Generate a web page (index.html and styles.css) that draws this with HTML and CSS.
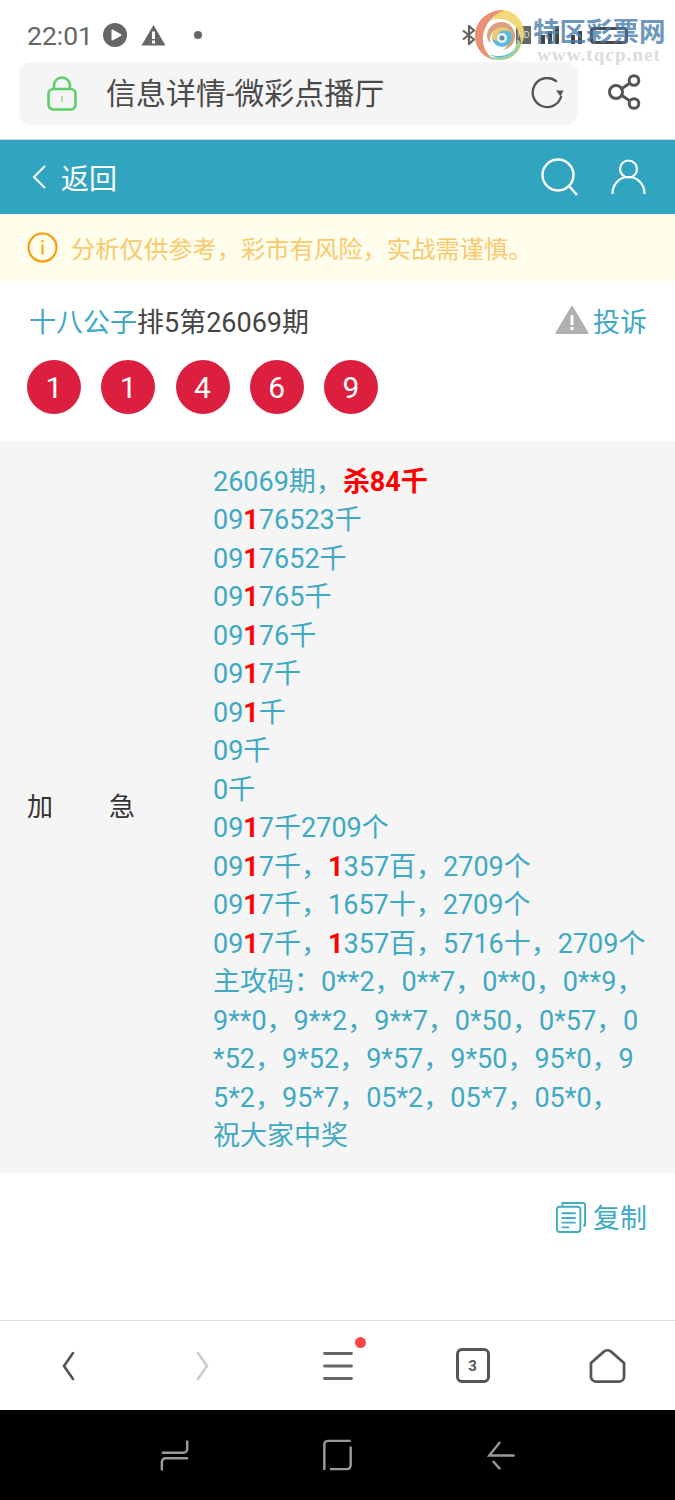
FILE: index.html
```html
<!DOCTYPE html>
<html lang="zh-CN">
<head>
    <meta charset="UTF-8">
    <meta name="viewport" content="width=device-width, initial-scale=1.0">
    <title>信息详情-微彩点播厅</title>
    <link rel="stylesheet" href="styles.css">
</head>
<body>
    <!-- phone status bar -->
    <div class="status-bar">
        <span class="clock">22:01</span>
        <svg class="st-play" width="26" height="24" viewBox="0 0 26 24"><circle cx="12" cy="12" r="12" fill="#666"/><path d="M24 12l-4 5V7z" fill="#666"/><path d="M8.500 7.500a1 1 0 0 1 1.500-.8l8 4.500a1 1 0 0 1 0 1.600l-8 4.500a1 1 0 0 1-1.500-.8z" fill="#fff"/></svg>
        <svg class="st-warn" width="25" height="22" viewBox="0 0 25 22"><path d="M12.500 1L24.500 21.500H.5z" fill="#666"/><rect x="11" y="7.500" width="3" height="7.500" fill="#fff"/><rect x="11" y="16.500" width="3" height="3" fill="#fff"/></svg>
        <span class="st-dot"></span>
        <div class="st-right">
            <svg width="16" height="20" viewBox="0 0 16 20"><path d="M2 5.500l11 9-5 4.500V1l5 4.500-11 9" fill="none" stroke="#666" stroke-width="2.200"/></svg>
            <span class="st-hd">HD</span>
            <span class="st-sig"><i></i><i></i><i></i></span>
            <span class="st-sig st-sig-b"><i></i><i></i></span>
            <span class="st-batt"></span>
        </div>
    </div>

    <!-- watermark lies over the status bar -->
    <div class="watermark">
        <svg class="wm-logo" width="50" height="52" viewBox="0 0 50 52">
            <path d="M30 1C14 0 0 11 0 27c0 13 9 22 20 24-8-5-13-13-12-23C9 15 18 6 30 1z" fill="#e58768" opacity=".92"/>
            <path d="M30 1c10 2 19 11 19 23 0 5-1 9-3 12 0-10-3-18-11-23-6-4-14-4-19-1 4-6 9-10 14-11z" fill="#f2d675" opacity=".95"/>
            <path d="M46 36c-3 9-12 16-22 15-4 0-8-1-11-4 9 3 19 2 25-5 3-4 4-8 4-12 2 1 4 3 4 6z" fill="#9fcf8f" opacity=".95"/>
            <path d="M14 45c9 4 19 2 25-4-5 7-15 11-25 4z" fill="#5cbcd8"/>
            <path d="M12 27c0-9 8-15 16-14 7 1 12 7 12 14s-5 13-12 14c6-4 7-10 5-15-2-6-9-8-13-5-5 3-6 9-4 14-2-2-4-5-4-8z" fill="#dba17c"/>
            <circle cx="27" cy="28" r="10" fill="#5cbcd8"/>
            <path d="M17 28c0-6 5-10 10-10 4 0 7 2 9 5-4-2-10-2-12 1-2 2-2 5-1 8-3-1-6-1-6-4z" fill="#eec979"/>
            <circle cx="27" cy="29" r="5" fill="#eaf4f4"/>
            <circle cx="27" cy="29" r="2.500" fill="#5f8f9a"/>
        </svg>
        <div class="wm-text">
            <div class="wm-name">特区彩票网</div>
            <div class="wm-url">www.tqcp.net</div>
        </div>
    </div>

    <!-- browser toolbar -->
    <div class="browser-bar">
        <div class="address">
            <svg width="30" height="35" viewBox="0 0 30 35"><rect x="1.500" y="13" width="27" height="20.500" rx="5" fill="none" stroke="#5bd06a" stroke-width="2.600"/><path d="M7 13V9.500a8 8 0 0 1 16 0V13" fill="none" stroke="#5bd06a" stroke-width="2.600"/><rect x="14" y="20" width="2" height="6" fill="#a5e5ad"/></svg>
            <span class="address-title">信息详情-微彩点播厅</span>
            <svg class="reload" width="33" height="32" viewBox="0 0 33 32"><path d="M30 20A14.500 14.500 0 1 1 25 4" fill="none" stroke="#555" stroke-width="2.400" stroke-linecap="round"/><path d="M25 13.500h7.500l-3 6z" fill="#555"/></svg>
        </div>
        <svg class="share" width="34" height="36" viewBox="0 0 34 36"><g fill="none" stroke="#555" stroke-width="3"><circle cx="8" cy="18" r="6.500"/><circle cx="26" cy="6.500" r="4.800"/><circle cx="26" cy="29.500" r="4.800"/><path d="M14 14.500L22 9M14 21.500L22 27"/></g></svg>
    </div>

    <header class="top-nav">
        <a class="back">
            <svg width="16" height="26" viewBox="0 0 16 26"><path d="M14 2L3 13l11 11" fill="none" stroke="#fff" stroke-width="2"/></svg>
            <span>返回</span>
        </a>
        <div class="nav-icons">
            <svg width="37" height="38" viewBox="0 0 37 38"><circle cx="17" cy="17" r="15.500" fill="none" stroke="#fff" stroke-width="2.400"/><path d="M28 28l8 9" stroke="#fff" stroke-width="2.400"/></svg>
            <svg width="35" height="36" viewBox="0 0 35 36"><circle cx="17.500" cy="10" r="8.500" fill="none" stroke="#fff" stroke-width="2.200"/><path d="M1.500 35c0-10 7-17 16-17s16 7 16 17" fill="none" stroke="#fff" stroke-width="2.200"/></svg>
        </div>
    </header>

    <div class="notice">
        <svg width="31" height="31" viewBox="0 0 31 31"><circle cx="15.500" cy="15.500" r="14" fill="none" stroke="#fb9d0e" stroke-width="2.200"/><rect x="14.500" y="8" width="2" height="2.600" fill="#fb9d0e"/><rect x="14.500" y="12.500" width="2" height="10" fill="#fb9d0e"/></svg>
        <span>分析仅供参考，彩市有风险，实战需谨慎。</span>
    </div>

    <section class="info">
        <div class="info-head">
            <div class="info-title"><span class="teal">十八公子</span>排5第26069期</div>
            <a class="complain">
                <svg width="34" height="30" viewBox="0 0 34 30"><path d="M17 2L32.500 28H1.500z" fill="#b0b0b0" stroke="#b0b0b0" stroke-width="2" stroke-linejoin="round"/><rect x="15.500" y="10" width="3" height="10" fill="#fff"/><rect x="15.500" y="22" width="3" height="3" fill="#fff"/></svg>
                <span>投诉</span>
            </a>
        </div>
        <div class="balls">
            <span class="ball">1</span>
            <span class="ball">1</span>
            <span class="ball">4</span>
            <span class="ball">6</span>
            <span class="ball">9</span>
        </div>
    </section>

    <section class="detail">
        <div class="detail-label"><span>加</span><span>急</span></div>
        <div class="detail-text">
            26069期，<b>杀84千</b><br>
            09<b>1</b>76523千<br>
            09<b>1</b>7652千<br>
            09<b>1</b>765千<br>
            09<b>1</b>76千<br>
            09<b>1</b>7千<br>
            09<b>1</b>千<br>
            09千<br>
            0千<br>
            09<b>1</b>7千2709个<br>
            09<b>1</b>7千，<b>1</b>357百，2709个<br>
            09<b>1</b>7千，1657十，2709个<br>
            09<b>1</b>7千，<b>1</b>357百，5716十，2709个<br>
            主攻码：0**2，0**7，0**0，0**9，<br>
            9**0，9**2，9**7，0*50，0*57，0<br>
            *52，9*52，9*57，9*50，95*0，9<br>
            5*2，95*7，05*2，05*7，05*0，<br>
            祝大家中奖
        </div>
    </section>

    <div class="copy-row">
        <a class="copy">
            <svg width="30" height="32" viewBox="0 0 32 34"><g fill="none" stroke="#42abc4" stroke-width="2"><path d="M7 5V2h22a2 2 0 0 1 2 2v22h-2"/><rect x="1" y="6" width="25" height="27" rx="3"/><path d="M6 13h15M6 18h15M6 23h15M6 28h8"/></g></svg>
            <span>复制</span>
        </a>
    </div>

    <div class="spacer"></div>

    <nav class="browser-nav">
        <svg width="14" height="30" viewBox="0 0 14 30"><path d="M12 2L3 15l9 13" fill="none" stroke="#555" stroke-width="2.600" stroke-linecap="round"/></svg>
        <svg width="14" height="30" viewBox="0 0 14 30"><path d="M2 2l9 13-9 13" fill="none" stroke="#ccc" stroke-width="2.600" stroke-linecap="round"/></svg>
        <span class="menu-btn">
            <svg width="30" height="28" viewBox="0 0 30 28"><path d="M1.500 1.500h27M1.500 14h27M1.500 26.500h27" stroke="#666" stroke-width="2.800" stroke-linecap="round"/></svg>
            <i class="red-dot"></i>
        </span>
        <span class="tab-count">3</span>
        <svg width="37" height="36" viewBox="0 0 38 36"><path d="M2 15L15 3.500a6 6 0 0 1 8 0L36 15v14a5 5 0 0 1-5 5H7a5 5 0 0 1-5-5z" fill="none" stroke="#555" stroke-width="2.800"/></svg>
    </nav>

    <div class="system-nav">
        <svg width="30" height="33" viewBox="0 0 32 34"><g fill="none" stroke="#9a9a9a" stroke-width="2.600"><path d="M29 1v9a4 4 0 0 1-4 4H2"/><path d="M30 20H6a4 4 0 0 0-4 4v9"/></g></svg>
        <svg width="31" height="32" viewBox="0 0 32 34"><g fill="none" stroke="#9a9a9a" stroke-width="2.600"><path d="M30 2H6a4 4 0 0 0-4 4v27"/><path d="M30 8v20a4 4 0 0 1-4 4H8"/></g></svg>
        <svg width="28" height="29" viewBox="0 0 30 32"><g fill="none" stroke="#9a9a9a" stroke-width="2.600"><path d="M14 1L2 16h28"/><path d="M6 22l8 9"/></g></svg>
    </div>
</body>
</html>
```

FILE: styles.css
```css
* {
    box-sizing: border-box;
}
body {
    font-family: Roboto, "Noto Sans CJK SC", sans-serif;
    margin: 0;
    padding: 0;
    width: 675px;
    height: 1500px;
    display: flex;
    flex-direction: column;
    background-color: #fff;
    overflow: hidden;
    position: relative;
}
svg {
    display: block;
    flex: none;
}

/* status bar */
.status-bar {
    height: 62px;
    padding: 8px 47px 0 27px;
    display: flex;
    align-items: center;
    color: #666;
}
.clock {
    font-size: 26.500px;
    margin-right: 10px;
}
.st-play {
    margin-right: 12px;
}
.st-dot {
    width: 8px;
    height: 8px;
    border-radius: 50%;
    background-color: #666;
    margin-left: 28px;
}
.st-right {
    margin-left: auto;
    display: flex;
    align-items: center;
}
.st-hd {
    width: 15px;
    height: 18px;
    font-size: 9px;
    line-height: 18px;
    text-align: center;
    background-color: #666;
    color: #ddd;
    margin-left: 39px;
}
.st-sig {
    display: flex;
    align-items: flex-end;
    gap: 3px;
    height: 18px;
    margin-left: 10px;
}
.st-sig i {
    width: 4px;
    height: 9px;
    background-color: #444;
}
.st-sig i:nth-child(2) {
    height: 13px;
}
.st-sig i:nth-child(3) {
    height: 18px;
}
.st-sig-b {
    margin-left: 12px;
}
.st-batt {
    width: 38px;
    height: 17px;
    border: 3px solid #4a4a4a;
    border-radius: 4px;
    margin-left: 8px;
}

/* watermark */
.watermark {
    position: absolute;
    top: 9px;
    left: 475px;
    display: flex;
    gap: 8px;
}
.wm-name {
    font-size: 26.500px;
    line-height: 27px;
    color: rgba(70, 122, 170, 0.8);
    font-weight: bold;
    white-space: nowrap;
    margin-top: 9px;
}
.wm-url {
    font-family: "Liberation Serif", serif;
    font-size: 19px;
    line-height: 20px;
    font-weight: bold;
    letter-spacing: 1.100px;
    color: #dcdcdc;
    margin-left: 4px;
}

/* browser toolbar */
.browser-bar {
    height: 78px;
    padding: 0 33px 15px 19px;
    display: flex;
    align-items: center;
    justify-content: space-between;
    border-bottom: 1px solid #ddd;
}
.address {
    width: 559px;
    height: 63px;
    background-color: #f5f5f5;
    border-radius: 12px;
    padding: 0 14px 0 28px;
    display: flex;
    align-items: center;
}
.address-title {
    font-size: 30px;
    color: #4a4a4a;
    margin-left: 29px;
    margin-top: -4px;
}
.reload {
    margin-left: auto;
}
.share {
    margin-top: -2px;
}

/* teal header */
.top-nav {
    height: 74px;
    background-color: #31a5bf;
    padding: 0 29px 0 31px;
    display: flex;
    align-items: center;
    justify-content: space-between;
    color: #fff;
}
.back {
    display: flex;
    align-items: center;
    gap: 14px;
    font-size: 28px;
}
.nav-icons {
    display: flex;
    align-items: center;
    gap: 33px;
}

.notice {
    height: 67px;
    background-color: #fffdeb;
    padding: 0 0 0 27px;
    display: flex;
    align-items: center;
    gap: 13px;
    font-size: 24.300px;
    color: #fbc96d;
}

/* title and balls */
.info {
    height: 160px;
    padding: 20px 28px 0 27px;
}
.info-head {
    display: flex;
    justify-content: space-between;
    align-items: center;
    height: 38px;
}
.info-title {
    font-size: 27px;
    color: #444;
    padding-left: 2px;
}
.teal {
    color: #3fa9c3;
}
.complain {
    display: flex;
    align-items: center;
    gap: 4px;
    font-size: 27px;
    color: #3fa9c3;
}
.balls {
    display: flex;
    gap: 20.250px;
    margin-top: 21px;
}
.ball {
    width: 54px;
    height: 54px;
    border-radius: 50%;
    background-color: #dc1f3e;
    color: #fff;
    font-size: 30px;
    display: flex;
    align-items: center;
    justify-content: center;
}

/* detail table */
.detail {
    height: 732px;
    background-color: #f5f5f5;
    display: flex;
    align-items: center;
    padding: 0 0 0 27px;
}
.detail-label {
    width: 108px;
    display: flex;
    justify-content: space-between;
    font-size: 26px;
    color: #333;
    flex: none;
    margin-bottom: 6px;
}
.detail-text {
    margin-left: 78px;
    margin-top: 4px;
    font-size: 27px;
    line-height: 38.500px;
    color: #3fa9c3;
    white-space: nowrap;
}
.detail-text b {
    color: #f00;
}

.copy-row {
    height: 83px;
    padding: 4px 28px 0 0;
    display: flex;
    justify-content: flex-end;
    align-items: center;
}
.copy {
    display: flex;
    align-items: center;
    gap: 7px;
    font-size: 27px;
    color: #3fa9c3;
}
.spacer {
    flex: 1;
}

/* bottom browser nav */
.browser-nav {
    height: 90px;
    border-top: 1px solid #ddd;
    display: grid;
    grid-template-columns: repeat(5, 135px);
    align-items: center;
    justify-items: center;
}
.menu-btn {
    position: relative;
    display: block;
}
.red-dot {
    position: absolute;
    top: -15px;
    right: -13px;
    width: 11px;
    height: 11px;
    border-radius: 50%;
    background-color: #f44;
}
.tab-count {
    width: 34px;
    height: 35px;
    border: 3px solid #555;
    border-radius: 6px;
    font-size: 15px;
    font-weight: bold;
    color: #555;
    display: flex;
    align-items: center;
    justify-content: center;
}
.system-nav {
    height: 90px;
    background-color: #000;
    display: grid;
    grid-template-columns: repeat(3, 163px);
    justify-content: center;
    justify-items: center;
    align-items: center;
}
```
